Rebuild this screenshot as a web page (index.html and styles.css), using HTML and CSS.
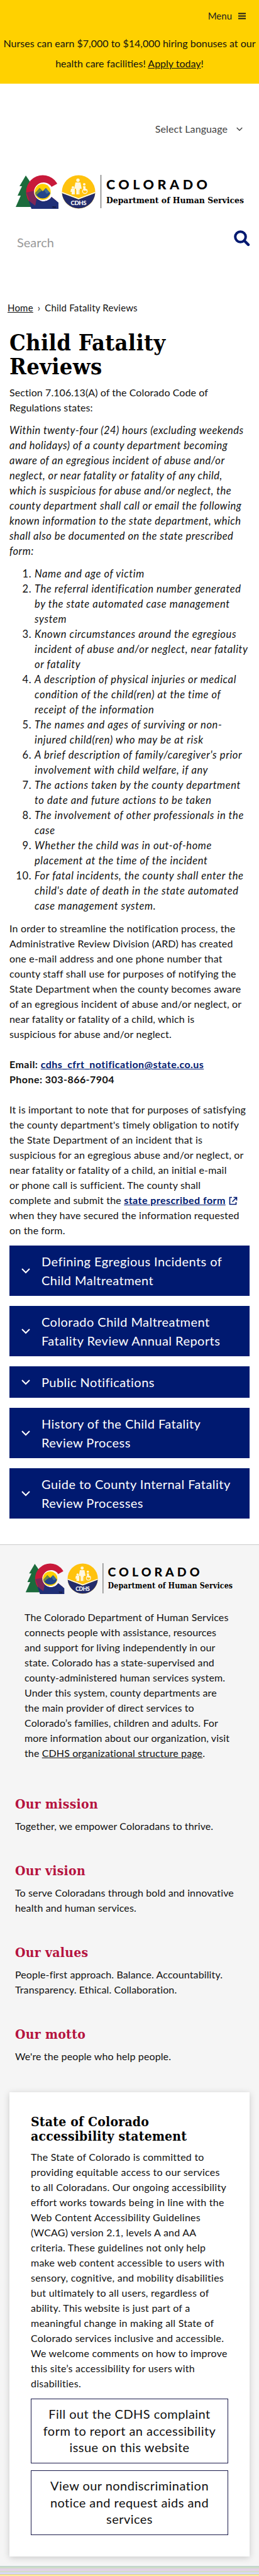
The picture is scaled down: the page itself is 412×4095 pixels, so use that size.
FILE: index.html
```html
<!DOCTYPE html>
<html lang="en">
<head>
<meta charset="utf-8">
<title>Child Fatality Reviews</title>
<link rel="stylesheet" href="styles.css">
</head>
<body>
<svg width="0" height="0" class="defs">
  <defs>
    <symbol id="logo" viewBox="0 0 364 54">
      <path d="M16 1 L6 18 H10 L3 33 H8 L0 51 H24 L29 20 Z" fill="#1c6b3c"/>
      <clipPath id="cband"><path d="M68 0 H14 V54 H68 V44 L57 35 A15 15 0 1 1 57 19 L68 13 Z"/></clipPath>
      <g clip-path="url(#cband)">
        <circle cx="43" cy="27" r="26.500" fill="#c8193a"/>
        <path d="M21 42 L34 28 L43 20 L52 26 L70 34 V54 H25 Z" fill="#1f2f77"/>
        <path d="M17 28 L22 42 L31 49 L36 24 Z" fill="#7d2657"/>
      </g>
      <circle cx="43" cy="27" r="13.700" fill="#fff"/>
      <circle cx="43" cy="27" r="12.700" fill="#ffd100"/>
      <path d="M31 29 L38 21 L43 26 L48 21 L55 29 A12.700 12.700 0 0 1 31 29 Z" fill="#21468b"/>
      <path d="M31 29 L38 21 L42 25 L37 28 L32 33 Z" fill="#718b3c"/>
      <path d="M45 24 L48 21 L54 28 L49 30 Z" fill="#3d6c94"/>
      <text x="58" y="53" class="logo-tm">TM</text>
      <circle cx="100" cy="27" r="26.500" fill="#ffc20e"/>
      <path d="M73.600 29 L100 39 L126.400 29 A26.500 26.500 0 0 1 73.600 29 Z" fill="#232c6b"/>
      <path d="M73.600 28 L100 38 L126.400 28" fill="none" stroke="#fff" stroke-width="1.600"/>
      <g fill="#fff7df">
        <circle cx="99" cy="8.500" r="2.700"/><path d="M95 12 H103 L105 22 H102 V31 H96 V22 H93 Z"/>
        <circle cx="91" cy="20" r="2"/><path d="M88 22 H94 V31 H89 V27 H87 Z"/>
        <circle cx="109" cy="15" r="2"/><path d="M107 18 H111 V23 H114 V25 H108 Z"/>
      </g>
      <circle cx="110" cy="26" r="3.700" fill="none" stroke="#fff7df" stroke-width="1.300"/>
      <path d="M96 24 V31 M101 24 V31" stroke="#ffc20e" stroke-width="0.800"/>
      <text x="87.500" y="48" class="logo-cdhs" textLength="25">CDHS</text>
      <path d="M135.500 0 V53" stroke="#888" stroke-width="1.600"/>
      <text x="144" y="23" class="logo-name" textLength="161">COLORADO</text>
      <text x="144" y="44.500" class="logo-dept" textLength="219" lengthAdjust="spacingAndGlyphs">Department of Human Services</text>
    </symbol>
    <symbol id="chevron" viewBox="0 0 14 9">
      <path d="M1 1 L7 7 L13 1" fill="none" stroke="currentColor" stroke-width="2"/>
    </symbol>
  </defs>
</svg>

<header>
  <div class="topbar">
    <div class="menu"><span>Menu</span><svg width="12" height="11"><path d="M0 1.500H12M0 5.500H12M0 9.500H12" stroke="#1b1b1b" stroke-width="1.800"/></svg></div>
    <p class="notice">Nurses can earn $7,000 to $14,000 hiring bonuses at our<br>health care facilities! <a href="#">Apply today</a>!</p>
  </div>
  <div class="language"><span>Select Language</span><svg width="10" height="7"><use href="#chevron"/></svg></div>
  <svg class="logo" width="364" height="54"><use href="#logo"/></svg>
  <div class="search"><span>Search</span>
    <svg width="26" height="26" viewBox="0 0 26 26"><circle cx="10.500" cy="10.500" r="8.300" fill="none" stroke="#001970" stroke-width="4"/><path d="M16.500 16.500 L23 23" stroke="#001970" stroke-width="4.400" stroke-linecap="round"/></svg>
  </div>
</header>

<main>
  <nav class="crumbs"><a href="#">Home</a><span class="sep">›</span><span>Child Fatality Reviews</span></nav>
  <h1>Child Fatality<br>Reviews</h1>
  <p class="intro">Section 7.106.13(A) of the Colorado Code of<br>Regulations states:</p>
  <p class="quote">Within twenty-four (24) hours (excluding weekends<br>and holidays) of a county department becoming<br>aware of an egregious incident of abuse and/or<br>neglect, or near fatality or fatality of any child,<br>which is suspicious for abuse and/or neglect, the<br>county department shall call or email the following<br>known information to the state department, which<br>shall also be documented on the state prescribed<br>form:</p>
  <ol class="items">
    <li>Name and age of victim</li>
    <li>The referral identification number generated<br>by the state automated case management<br>system</li>
    <li>Known circumstances around the egregious<br>incident of abuse and/or neglect, near fatality<br>or fatality</li>
    <li>A description of physical injuries or medical<br>condition of the child(ren) at the time of<br>receipt of the information</li>
    <li>The names and ages of surviving or non-<br>injured child(ren) who may be at risk</li>
    <li>A brief description of family/caregiver's prior<br>involvement with child welfare, if any</li>
    <li>The actions taken by the county department<br>to date and future actions to be taken</li>
    <li>The involvement of other professionals in the<br>case</li>
    <li>Whether the child was in out-of-home<br>placement at the time of the incident</li>
    <li>For fatal incidents, the county shall enter the<br>child's date of death in the state automated<br>case management system.</li>
  </ol>
  <div class="process">
    <p>In order to streamline the notification process, the<br>Administrative Review Division (ARD) has created<br>one e-mail address and one phone number that<br>county staff shall use for purposes of notifying the<br>State Department when the county becomes aware<br>of an egregious incident of abuse and/or neglect, or<br>near fatality or fatality of a child, which is<br>suspicious for abuse and/or neglect.</p>
    <p class="contact">Email: <a href="#">cdhs_cfrt_notification@state.co.us</a><br>Phone: 303-866-7904</p>
    <p>It is important to note that for purposes of satisfying<br>the county department's timely obligation to notify<br>the State Department of an incident that is<br>suspicious for an egregious abuse and/or neglect, or<br>near fatality or fatality of a child, an initial e-mail<br>or phone call is sufficient. The county shall<br>complete and submit the <a class="form-link" href="#">state prescribed form</a><svg class="ext" width="14" height="14"><path d="M5 1.500H1.500V12.500H11.500V9M7.500 1.500H12.500V6.500M12.300 1.700L5.500 8.500" fill="none" stroke="#001970" stroke-width="1.600"/></svg><br>when they have secured the information requested<br>on the form.</p>
  </div>
  <div class="accordions">
    <div class="acc"><svg width="14" height="9"><use href="#chevron"/></svg><span>Defining Egregious Incidents of<br>Child Maltreatment</span></div>
    <div class="acc"><svg width="14" height="9"><use href="#chevron"/></svg><span>Colorado Child Maltreatment<br>Fatality Review Annual Reports</span></div>
    <div class="acc"><svg width="14" height="9"><use href="#chevron"/></svg><span>Public Notifications</span></div>
    <div class="acc"><svg width="14" height="9"><use href="#chevron"/></svg><span>History of the Child Fatality<br>Review Process</span></div>
    <div class="acc"><svg width="14" height="9"><use href="#chevron"/></svg><span>Guide to County Internal Fatality<br>Review Processes</span></div>
  </div>
</main>

<footer>
  <svg class="logo" width="332" height="49"><use href="#logo"/></svg>
  <p class="about">The Colorado Department of Human Services<br>connects people with assistance, resources<br>and support for living independently in our<br>state. Colorado has a state-supervised and<br>county-administered human services system.<br>Under this system, county departments are<br>the main provider of direct services to<br>Colorado’s families, children and adults. For<br>more information about our organization, visit<br>the <a href="#">CDHS organizational structure page</a>.</p>
  <section class="creed"><h2>Our mission</h2><p>Together, we empower Coloradans to thrive.</p></section>
  <section class="creed"><h2>Our vision</h2><p>To serve Coloradans through bold and innovative<br>health and human services.</p></section>
  <section class="creed"><h2>Our values</h2><p>People-first approach. Balance. Accountability.<br>Transparency. Ethical. Collaboration.</p></section>
  <section class="creed"><h2>Our motto</h2><p>We're the people who help people.</p></section>
  <section class="card">
    <h2>State of Colorado<br>accessibility statement</h2>
    <p>The State of Colorado is committed to<br>providing equitable access to our services<br>to all Coloradans. Our ongoing accessibility<br>effort works towards being in line with the<br>Web Content Accessibility Guidelines<br>(WCAG) version 2.1, levels A and AA<br>criteria. These guidelines not only help<br>make web content accessible to users with<br>sensory, cognitive, and mobility disabilities<br>but ultimately to all users, regardless of<br>ability. This website is just part of a<br>meaningful change in making all State of<br>Colorado services inclusive and accessible.<br>We welcome comments on how to improve<br>this site’s accessibility for users with<br>disabilities.</p>
    <a class="btn">Fill out the CDHS complaint<br>form to report an accessibility<br>issue on this website</a>
    <a class="btn">View our nondiscrimination<br>notice and request aids and<br>services</a>
  </section>
  <div class="stripes"></div>
</footer>
</body>
</html>
```
FILE: styles.css
```css
* { box-sizing: border-box; }
body { margin: 0; font: 16px/24px Lato, "Open Sans", sans-serif; color: #111; background: #fff; }
h1, h2, p, ol { margin: 0; }
a { color: inherit; }
svg { display: block; }
.defs { position: absolute; }

.topbar { height: 133px; background: #ffd100; padding-top: 13px; }
.menu { display: flex; justify-content: flex-end; align-items: center; gap: 10px; padding-right: 21px; color: #222; font-size: 15px; }
.notice { margin-top: 16px; text-align: center; line-height: 32px; white-space: nowrap; }
.language { display: flex; justify-content: flex-end; align-items: center; gap: 14px; margin-top: 60px; padding-right: 26px; color: #444; letter-spacing: 0.100px; }
header .logo { margin: 61px 0 0 25px; }
.search { display: flex; justify-content: space-between; align-items: flex-start; margin-top: 34px; padding: 0 14px 0 27px; height: 40px; color: #999; font-size: 20px; }
.search span { padding-top: 7px; }
.logo-tm { font: 4px Lato, sans-serif; }
.logo-cdhs { font: 900 9.500px Lato, sans-serif; fill: #fff; }
.logo-name { font: 900 21.500px Lato, sans-serif; }
.logo-dept { font: bold 13.500px "DejaVu Serif", serif; }

main { padding: 0 15px; }
.crumbs { display: flex; margin: 71px 0 0 -3px; font-size: 15px; letter-spacing: 0.200px; }
.crumbs .sep { margin: 0 7px; }
h1 { margin-top: 25px; font: bold 36px/37.500px "DejaVu Serif Condensed", "DejaVu Serif", serif; font-stretch: condensed; letter-spacing: 0.300px; color: #000; white-space: nowrap; }
.intro { margin-top: 11px; letter-spacing: 0.080px; white-space: nowrap; }
.quote { margin-top: 12px; font-size: 16.500px; font-style: italic; letter-spacing: 0.500px; white-space: nowrap; }
.items { margin-top: 12px; padding-left: 40px; font-size: 16.500px; font-style: italic; letter-spacing: 0.620px; white-space: nowrap; }
.items li::marker { font-style: normal; }
.process { margin-top: 12px; letter-spacing: 0.180px; white-space: nowrap; }
.contact { margin: 24px 0; font-weight: bold; letter-spacing: 0.450px; }
.process a { color: #001970; font-weight: bold; }
.form-link { letter-spacing: 0.450px; }
.ext { display: inline-block; margin-left: 5px; vertical-align: -2px; }
.accordions { display: flex; flex-direction: column; gap: 16px; margin-top: 12px; }
.acc { display: flex; align-items: center; gap: 18px; padding: 10px 0 10px 19px; background: #001970; color: #fff; font-size: 20px; line-height: 30px; letter-spacing: 0.450px; white-space: nowrap; }

footer { margin-top: 41px; border-top: 1px solid #ccc; background: #f5f5f5; letter-spacing: 0.120px; }
footer .logo { margin: 29px 0 0 40px; }
.about { margin: 25px 0 0 39px; white-space: nowrap; }
.creed { margin: 0 24px 45px; white-space: nowrap; }
.about + .creed { margin-top: 55px; }
.creed h2 { font: bold 21px/28px "DejaVu Serif Condensed", "DejaVu Serif", serif; font-stretch: condensed; letter-spacing: 0.300px; color: #b5123e; }
.creed p { margin-top: 9px; }
.card { margin: 0 15px; height: 738px; padding: 36px 34px 0; background: #fff; box-shadow: 0 2px 10px rgba(0,0,0,.18); white-space: nowrap; }
.card h2 { margin-bottom: 10px; font: bold 21px/22.500px "DejaVu Serif Condensed", "DejaVu Serif", serif; font-stretch: condensed; letter-spacing: 0.200px; color: #000; }
.card p { letter-spacing: 0.240px; }
.btn { display: block; margin-top: 11px; height: 103px; padding-top: 10px; border: 1.500px solid #1b1b4b; text-align: center; font-size: 20px; line-height: 26.500px; letter-spacing: 0.450px; }
.card p + .btn { margin-top: 12px; }
.stripes { height: 15px; margin-top: 15px; background: linear-gradient(#b9cfd0 0 1px, #ccdcc8 1px 4px, #e3d3e6 4px 8px, #d3dec9 8px 10px, #d8d8f2 10px 14px, #ffd100 14px); }
```
